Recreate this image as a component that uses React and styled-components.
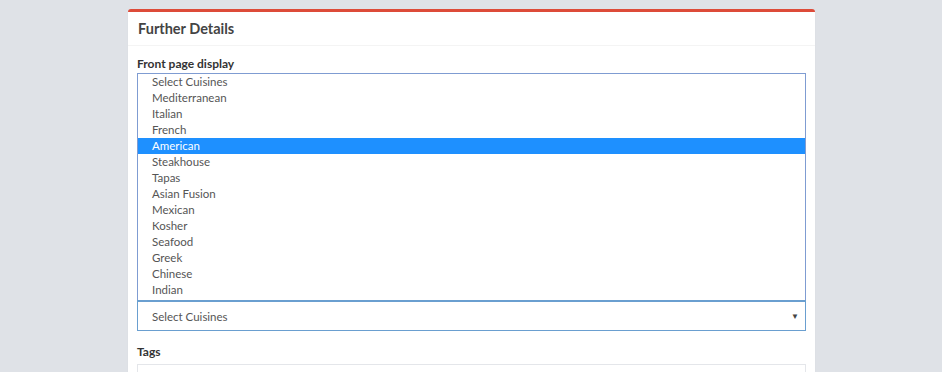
import React from "react";
import styled, { createGlobalStyle } from "styled-components";

const GlobalStyle = createGlobalStyle`
  html, body {
    margin: 0;
    padding: 0;
    background: #dfe2e7;
    font-family: Lato, "Open Sans", sans-serif;
  }
`;

const Page = styled.div`
  height: 372px;
  overflow: hidden;
  padding: 9px 0 0 128px;
  box-sizing: border-box;
`;

const Box = styled.div`
  width: 687px;
  background: #fff;
  border-top: 3px solid #dd4b39;
  border-radius: 3px 3px 0 0;
  box-shadow: 0 1px 1px rgba(0, 0, 0, 0.1);
`;

const BoxHeader = styled.div`
  height: 33px;
  display: flex;
  align-items: center;
  padding: 0 10px;
  border-bottom: 1px solid #f4f4f4;
`;

const Title = styled.h3`
  margin: 0;
  font-size: 14.5px;
  font-weight: 700;
  color: #444;
`;

const BoxBody = styled.div`
  padding: 10px 9px 20px 9px;
`;

const Label = styled.div`
  font-size: 12px;
  font-weight: 700;
  color: #333;
  line-height: 16px;
  margin-bottom: 1px;
`;

const List = styled.div`
  border: 1px solid #7f9cd2;
  border-bottom: none;
  padding-bottom: 2px;
`;

const Option = styled.div`
  height: 16px;
  line-height: 16px;
  padding-left: 14px;
  font-size: 11.5px;
  color: ${(p) => (p.$active ? "#fff" : "#555")};
  background: ${(p) => (p.$active ? "#1e90ff" : "transparent")};
`;

const Select = styled.div`
  height: 28px;
  border: 1px solid #6a9fd0;
  border-top: 2px solid #6a9fd0;
  display: flex;
  align-items: center;
  justify-content: space-between;
  padding: 0 6px 0 14px;
  font-size: 11.5px;
  color: #555;
`;

const Arrow = styled.span`
  font-size: 8px;
  color: #444;
`;

const Group = styled.div`
  margin-top: 13px;
`;

const TagsInput = styled.div`
  margin-top: 4px;
  height: 30px;
  border: 1px solid #e4e6ea;
`;

const cuisines = [
  "Select Cuisines",
  "Mediterranean",
  "Italian",
  "French",
  "American",
  "Steakhouse",
  "Tapas",
  "Asian Fusion",
  "Mexican",
  "Kosher",
  "Seafood",
  "Greek",
  "Chinese",
  "Indian",
];

const App = () => {
  return (
    <Page>
      <GlobalStyle />
      <Box>
        <BoxHeader>
          <Title>Further Details</Title>
        </BoxHeader>
        <BoxBody>
          <Label>Front page display</Label>
          <List>
            {cuisines.map((c) => (
              <Option key={c} $active={c === "American"}>
                {c}
              </Option>
            ))}
          </List>
          <Select>
            <span>Select Cuisines</span>
            <Arrow>▼</Arrow>
          </Select>
          <Group>
            <Label>Tags</Label>
            <TagsInput />
          </Group>
        </BoxBody>
      </Box>
    </Page>
  );
};

export default App;
